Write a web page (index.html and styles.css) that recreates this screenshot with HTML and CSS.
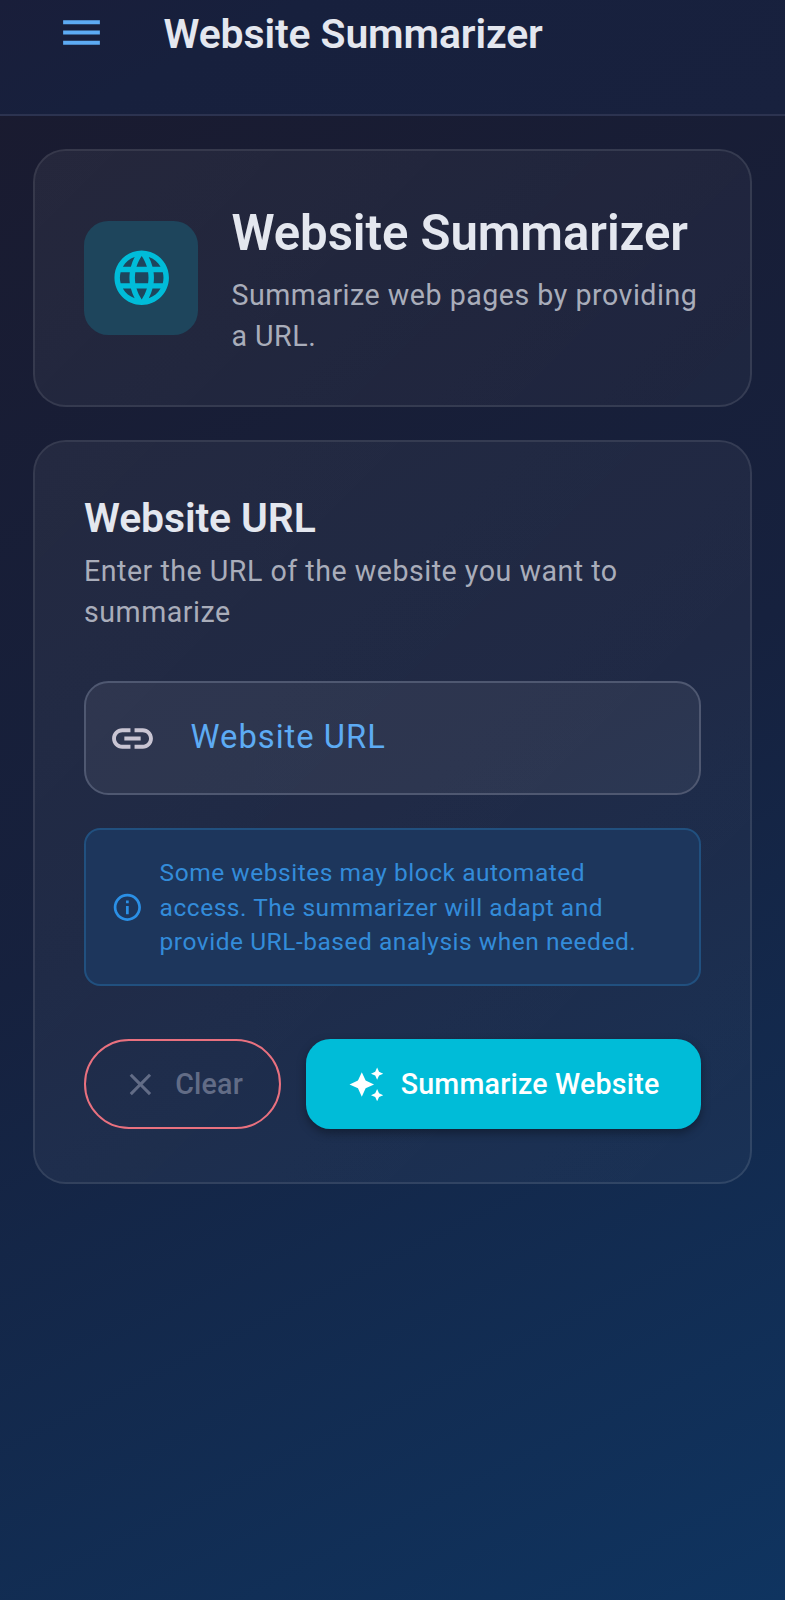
FILE: index.html
```
<!DOCTYPE html>
<html lang="en">
<head>
<meta charset="utf-8">
<title>Website Summarizer</title>
<link rel="stylesheet" href="styles.css">
</head>
<body>
<header class="app-bar">
  <svg class="menu-icon" viewBox="0 0 24 24"><path d="M3 18h18v-2H3v2zm0-5h18v-2H3v2zm0-7v2h18V6H3z"/></svg>
  <div class="app-title">Website Summarizer</div>
</header>
<main class="content">
  <section class="card intro">
    <div class="intro-badge">
      <svg class="globe-icon" viewBox="0 0 24 24"><path d="M11.99 2C6.47 2 2 6.48 2 12s4.47 10 9.99 10C17.52 22 22 17.52 22 12S17.52 2 11.99 2zm6.93 6h-2.95c-.32-1.25-.78-2.45-1.38-3.56 1.84.63 3.37 1.91 4.33 3.56zM12 4.04c.83 1.2 1.48 2.53 1.91 3.96h-3.82c.43-1.43 1.08-2.76 1.91-3.96zM4.26 14C4.1 13.36 4 12.69 4 12s.1-1.36.26-2h3.38c-.08.66-.14 1.32-.14 2s.06 1.34.14 2H4.26zm.82 2h2.95c.32 1.25.78 2.45 1.38 3.56-1.84-.63-3.37-1.9-4.33-3.56zm2.95-8H5.08c.96-1.66 2.49-2.93 4.33-3.56C8.81 5.55 8.35 6.75 8.03 8zM12 19.96c-.83-1.2-1.48-2.53-1.91-3.96h3.82c-.43 1.43-1.08 2.76-1.91 3.96zM14.34 14H9.66c-.09-.66-.16-1.32-.16-2s.07-1.35.16-2h4.68c.09.65.16 1.32.16 2s-.07 1.34-.16 2zm.25 5.56c.6-1.11 1.06-2.31 1.38-3.56h2.95c-.96 1.65-2.49 2.93-4.33 3.56zM16.36 14c.08-.66.14-1.32.14-2s-.06-1.34-.14-2h3.38c.16.64.26 1.31.26 2s-.1 1.36-.26 2h-3.38z"/></svg>
    </div>
    <div class="intro-text">
      <h1 class="intro-title">Website Summarizer</h1>
      <p class="body-text">Summarize web pages by providing<br>a URL.</p>
    </div>
  </section>
  <section class="card form">
    <h2 class="form-title">Website URL</h2>
    <p class="body-text">Enter the URL of the website you want to<br>summarize</p>
    <div class="url-field">
      <svg class="link-icon" viewBox="0 0 24 24"><path d="M3.9 12c0-1.71 1.39-3.1 3.1-3.1h4V7H7c-2.76 0-5 2.24-5 5s2.24 5 5 5h4v-1.9H7c-1.71 0-3.1-1.39-3.1-3.1zM8 13h8v-2H8v2zm9-6h-4v1.9h4c1.71 0 3.1 1.39 3.1 3.1s-1.39 3.1-3.1 3.1h-4V17h4c2.76 0 5-2.24 5-5s-2.24-5-5-5z"/></svg>
      <span class="url-label">Website URL</span>
    </div>
    <div class="notice">
      <svg class="info-icon" viewBox="0 0 24 24"><path d="M11 7h2v2h-2V7zm0 4h2v6h-2v-6zm1-9C6.48 2 2 6.48 2 12s4.48 10 10 10 10-4.48 10-10S17.52 2 12 2zm0 18c-4.41 0-8-3.59-8-8s3.59-8 8-8 8 3.59 8 8-3.59 8-8 8z"/></svg>
      <p class="notice-text">Some websites may block automated<br>access. The summarizer will adapt and<br>provide URL-based analysis when needed.</p>
    </div>
    <div class="actions">
      <button class="btn btn-clear" disabled>
        <svg class="btn-icon" viewBox="0 0 24 24"><path d="M19 6.41L17.59 5 12 10.59 6.41 5 5 6.41 10.59 12 5 17.59 6.41 19 12 13.41 17.59 19 19 17.59 13.41 12z"/></svg>
        <span>Clear</span>
      </button>
      <button class="btn btn-primary">
        <svg class="btn-icon" viewBox="0 0 24 24"><path d="M19 9l1.25-2.75L23 5l-2.75-1.25L19 1l-1.25 2.75L15 5l2.75 1.25L19 9zm-7.5.5L9 4 6.5 9.5 1 12l5.5 2.5L9 20l2.5-5.5L17 12l-5.5-2.5zM19 15l-1.25 2.75L15 19l2.75 1.25L19 23l1.25-2.75L23 19l-2.75-1.25L19 15z"/></svg>
        <span>Summarize Website</span>
      </button>
    </div>
  </section>
</main>
</body>
</html>
```
FILE: styles.css
```
* {
  box-sizing: border-box;
}

body {
  margin: 0;
  height: 1600px;
  overflow: hidden;
  font-family: Roboto, "Liberation Sans", sans-serif;
  color: #e4e7ef;
  background: linear-gradient(153.9deg, #1a1a2e 0%, #16213e 50%, #0f3460 100%);
}

svg {
  display: block;
  flex: none;
  fill: currentColor;
}

h1, h2, p {
  margin: 0;
}

.app-bar {
  display: flex;
  align-items: flex-start;
  height: 116px;
  padding: 8px 57px;
  border-bottom: 2px solid #2c3350;
  background: linear-gradient(153.9deg, #191e3a 0%, #17203d 30%, #18213e 100%);
}

.menu-icon {
  width: 49px;
  height: 49px;
  color: #5dabf4;
}

.app-title {
  margin: 2px 0 0 57.5px;
  font-size: 40.9px;
  line-height: 48px;
  font-weight: 600;
  letter-spacing: -0.1px;
}

.content {
  display: flex;
  flex-direction: column;
  gap: 33px;
  padding: 33px;
}

.card {
  padding: 49px;
  border: 2px solid rgba(255, 255, 255, 0.13);
  border-radius: 33px;
  background: linear-gradient(135deg, rgba(255, 255, 255, 0.055), rgba(255, 255, 255, 0.03));
  background-clip: padding-box;
}

.intro {
  display: flex;
  align-items: center;
  gap: 33px;
  height: 258px;
  padding-right: 0;
}

.intro-badge {
  display: grid;
  place-items: center;
  flex: none;
  width: 114.4px;
  height: 114.4px;
  border-radius: 24.5px;
  background: #1e455c;
}

.globe-icon {
  width: 65.4px;
  height: 65.4px;
  color: #00bcd9;
}

.intro-text {
  padding-top: 2px;
}

.intro-title {
  margin-bottom: 8px;
  font-size: 49.1px;
  line-height: 65.4px;
  font-weight: 600;
  letter-spacing: -0.05px;
}

.body-text {
  font-size: 28.6px;
  line-height: 41px;
  letter-spacing: 0.51px;
  color: #a9adba;
  white-space: nowrap;
}

.form {
  height: 744px;
  padding-top: 50px;
}

.form-title {
  margin-bottom: 6px;
  font-size: 40.9px;
  line-height: 53px;
  font-weight: 600;
  letter-spacing: -0.1px;
}

.url-field {
  display: flex;
  align-items: center;
  gap: 33.5px;
  height: 114px;
  margin-top: 48px;
  padding: 0 22px;
  border: 2px solid #4f5871;
  border-radius: 24.5px;
  background: rgba(255, 255, 255, 0.06);
}

.link-icon {
  width: 49px;
  height: 49px;
  color: #c9c5d3;
}

.url-label {
  padding-bottom: 2px;
  font-size: 32.7px;
  letter-spacing: 1.02px;
  color: #5dabf4;
}

.notice {
  display: flex;
  align-items: center;
  gap: 16.4px;
  height: 158px;
  margin-top: 33px;
  padding: 0 24.5px;
  border: 2px solid #21507f;
  border-radius: 16.4px;
  background: #1d365c;
}

.info-icon {
  width: 32.7px;
  height: 32.7px;
  color: #2b90e6;
}

.notice-text {
  padding-top: 2px;
  font-size: 24.5px;
  line-height: 34.6px;
  letter-spacing: 0.53px;
  color: #338cda;
  white-space: nowrap;
}

.actions {
  display: flex;
  gap: 25px;
  margin-top: 53px;
}

.btn {
  display: flex;
  align-items: center;
  justify-content: center;
  gap: 16.4px;
  height: 90px;
  padding: 0;
  border: 0;
  font-family: inherit;
  font-size: 28.6px;
  font-weight: 500;
  letter-spacing: 0.2px;
  white-space: nowrap;
}

.btn-icon {
  width: 36.8px;
  height: 36.8px;
}

.btn-clear {
  width: 197px;
  border: 2px solid #e9717f;
  border-radius: 45px;
  color: #626c86;
  background: transparent;
}

.btn-primary {
  flex: 1;
  border-radius: 24.5px;
  color: #fff;
  background: #00bcd8;
  box-shadow: 0 4px 10px rgba(0, 0, 0, 0.35);
}
```
